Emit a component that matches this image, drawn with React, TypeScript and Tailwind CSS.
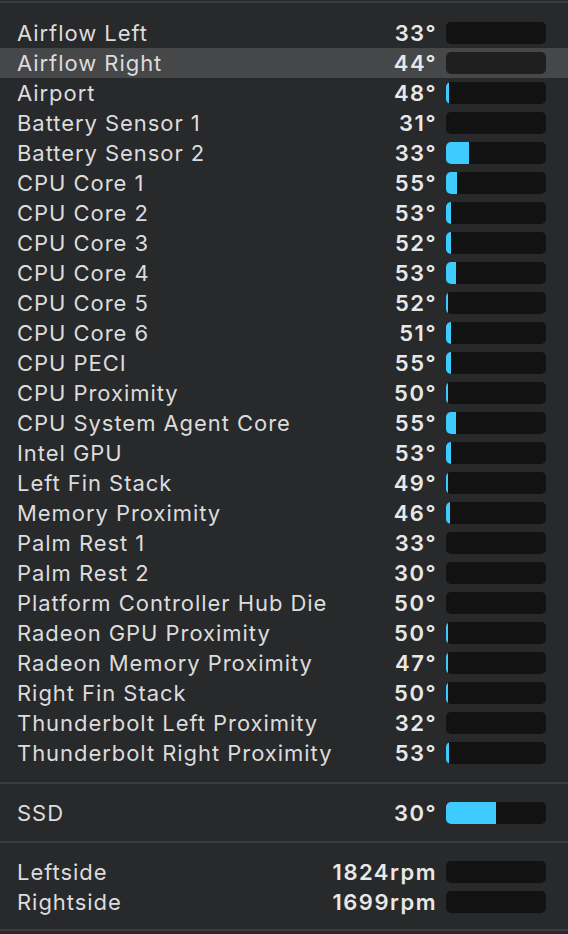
import React from "react";

type Row = { label: string; value: string; fill: number };

const SENSORS: Row[] = [
  { label: "Airflow Left", value: "33°", fill: 0 },
  { label: "Airflow Right", value: "44°", fill: 0 },
  { label: "Airport", value: "48°", fill: 3 },
  { label: "Battery Sensor 1", value: "31°", fill: 0 },
  { label: "Battery Sensor 2", value: "33°", fill: 23 },
  { label: "CPU Core 1", value: "55°", fill: 11 },
  { label: "CPU Core 2", value: "53°", fill: 5 },
  { label: "CPU Core 3", value: "52°", fill: 5 },
  { label: "CPU Core 4", value: "53°", fill: 10 },
  { label: "CPU Core 5", value: "52°", fill: 2 },
  { label: "CPU Core 6", value: "51°", fill: 5 },
  { label: "CPU PECI", value: "55°", fill: 5 },
  { label: "CPU Proximity", value: "50°", fill: 2 },
  { label: "CPU System Agent Core", value: "55°", fill: 10 },
  { label: "Intel GPU", value: "53°", fill: 5 },
  { label: "Left Fin Stack", value: "49°", fill: 2 },
  { label: "Memory Proximity", value: "46°", fill: 4 },
  { label: "Palm Rest 1", value: "33°", fill: 0 },
  { label: "Palm Rest 2", value: "30°", fill: 0 },
  { label: "Platform Controller Hub Die", value: "50°", fill: 0 },
  { label: "Radeon GPU Proximity", value: "50°", fill: 2 },
  { label: "Radeon Memory Proximity", value: "47°", fill: 2 },
  { label: "Right Fin Stack", value: "50°", fill: 2 },
  { label: "Thunderbolt Left Proximity", value: "32°", fill: 0 },
  { label: "Thunderbolt Right Proximity", value: "53°", fill: 3 },
];

const DRIVES: Row[] = [{ label: "SSD", value: "30°", fill: 50 }];

const FANS: Row[] = [
  { label: "Leftside", value: "1824rpm", fill: 0 },
  { label: "Rightside", value: "1699rpm", fill: 0 },
];

function SensorRow({ row, active }: { row: Row; active?: boolean }) {
  return (
    <div
      className={
        "flex h-[30px] items-center pl-[17px] pr-[22px] " +
        (active ? "bg-[#464749]" : "")
      }
    >
      <span className="flex-1 text-[22px] leading-none tracking-[0.95px] text-[#dcdcdc]">{row.label}</span>
      <span className="mr-[9px] text-[22px] leading-none font-semibold tracking-[1.5px] text-[#e8e8e8]">{row.value}</span>
      <div
        className={
          "h-[22px] w-[100px] overflow-hidden rounded-[5px] " +
          (active ? "bg-[#1f1f20]" : "bg-[#121212]")
        }
      >
        <div className="h-full bg-[#3ecbff]" style={{ width: `${row.fill}px` }} />
      </div>
    </div>
  );
}

export default function App() {
  return (
    <div
      className="h-[934px] w-[568px] overflow-hidden bg-[#28292b]"
      style={{ fontFamily: "Inter, 'Noto Sans', sans-serif" }}
    >
      <div className="h-px" />
      <div className="h-[2px] bg-[#3b3c3e]" />

      <div className="pt-[15px]">
        {SENSORS.map((r, i) => (
          <SensorRow key={r.label} row={r} active={i === 1} />
        ))}
      </div>

      <div className="mt-[14px] h-[2px] bg-[#3b3c3e]" />
      <div className="pt-[14px] pb-[13px]">
        {DRIVES.map((r) => (
          <SensorRow key={r.label} row={r} />
        ))}
      </div>

      <div className="h-[2px] bg-[#3b3c3e]" />
      <div className="pt-[14px] pb-[12px]">
        {FANS.map((r) => (
          <SensorRow key={r.label} row={r} />
        ))}
      </div>
      <div className="h-[2px] bg-[#3b3c3e]" />
    </div>
  );
}
